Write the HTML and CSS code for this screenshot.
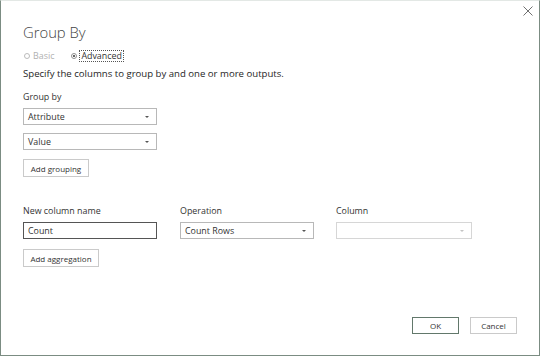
FILE: index.html
```html
<!DOCTYPE html>
<html>
<head>
<meta charset="utf-8">
<link rel="stylesheet" href="styles.css">
</head>
<body>
<div class="dialog">
  <button class="close" aria-label="Close">
    <svg width="10" height="10" viewBox="0 0 10 10"><path d="M0.5 0.5 L9.5 9.5 M9.5 0.5 L0.5 9.5" stroke="#707070" stroke-width="1" fill="none"/></svg>
  </button>
  <h1 class="title">Group By</h1>
  <div class="radios">
    <label class="radio disabled"><span class="dot"></span>Basic</label>
    <label class="radio checked"><span class="dot"><span class="inner"></span></span><span class="focus">Advanced</span></label>
  </div>
  <p class="desc">Specify the columns to group by and one or more outputs.</p>
  <div class="label first">Group by</div>
  <div class="stack">
    <div class="select"><span>Attribute</span><span class="caret"></span></div>
    <div class="select"><span>Value</span><span class="caret"></span></div>
    <button class="btn">Add grouping</button>
  </div>
  <div class="agg">
    <div class="col">
      <div class="label">New column name</div>
      <div class="input">Count</div>
    </div>
    <div class="col">
      <div class="label">Operation</div>
      <div class="select"><span>Count Rows</span><span class="caret"></span></div>
    </div>
    <div class="col">
      <div class="label">Column</div>
      <div class="select disabled wider"><span></span><span class="caret light"></span></div>
    </div>
  </div>
  <button class="btn agg-btn">Add aggregation</button>
  <div class="footer">
    <button class="btn wide ok">OK</button>
    <button class="btn wide">Cancel</button>
  </div>
</div>
</body>
</html>
```
FILE: styles.css
```css
html, body { margin: 0; padding: 0; }
body {
  width: 540px; height: 356px; overflow: hidden;
  font-family: "Open Sans", "Noto Sans", sans-serif;
  background: #fff;
}
.dialog {
  box-sizing: border-box;
  width: 540px; height: 356px;
  border: 1px solid #7b8c82;
  border-top-color: #e3e8e5;
  position: relative;
  padding: 21px 0 0 22px;
  color: #252525;
}
.close {
  position: absolute; right: 6px; top: 5px;
  width: 10px; height: 10px; padding: 0; border: 0; background: none;
  display: flex;
}
.title {
  margin: 0; font-weight: 300; font-size: 14.8px; line-height: 20px;
  color: #444; height: 20px;
}
.radios { display: flex; gap: 17px; margin-top: 8px; height: 12px; align-items: center; margin-left: 1px; }
.radio { display: flex; align-items: center; font-size: 8.9px; color: #333; line-height: 10px; }
.radio.disabled { color: #b0b0b0; }
.dot {
  width: 4px; height: 4px; border: 1px solid #bcbcbc; border-radius: 50%;
  margin-right: 3px; display: flex; align-items: center; justify-content: center;
  box-sizing: content-box;
}
.radio.checked .dot { border-color: #909090; }
.inner { width: 2px; height: 2px; border-radius: 50%; background: #333; }
.focus { outline: 1px dotted #555; outline-offset: 0; padding: 0 1px; line-height: 10px; }
.desc { margin: 5px 0 0; font-size: 9.6px; line-height: 14px; color: #252525; height: 14px; }
.label { font-size: 8.9px; color: #333; line-height: 12px; height: 12px; }
.label.first { margin-top: 10px; }
.stack { display: flex; flex-direction: column; gap: 8px; margin-top: 5px; align-items: flex-start; }
.select, .input {
  box-sizing: border-box; width: 134px; height: 17px;
  border: 1px solid #b8b8b8; background: #fff;
  display: flex; align-items: center; justify-content: space-between;
  padding: 0 7px 0 4px; font-size: 8.9px; color: #333;
}
.select.wider { width: 136px; }
.input { border-color: #555; }
.select.disabled { border-color: #d6d6d6; }
.caret {
  width: 0; height: 0; border-left: 2px solid transparent; border-right: 2px solid transparent;
  border-top: 2.5px solid #555;
}
.caret.light { border-top-color: #c4c4c4; }
.btn {
  box-sizing: border-box; height: 18px; padding: 0 6px;
  border: 1px solid #cacaca; background: #fff;
  font-family: inherit; font-size: 8px; color: #333;
  display: flex; align-items: center; justify-content: center;
}
.stack .btn { margin-top: 1px; width: 66px; }
.agg { display: flex; gap: 23px; margin-top: 28px; }
.agg .col { display: flex; flex-direction: column; gap: 5px; }
.agg .col:last-child { margin-left: -1px; }
.agg-btn { margin-top: 10px; width: 76px; }
.footer {
  position: absolute; right: 22px; bottom: 21px;
  display: flex; gap: 11px;
}
.btn.wide { width: 47px; height: 17px; }
.btn.ok { border-color: #62786b; }
```
